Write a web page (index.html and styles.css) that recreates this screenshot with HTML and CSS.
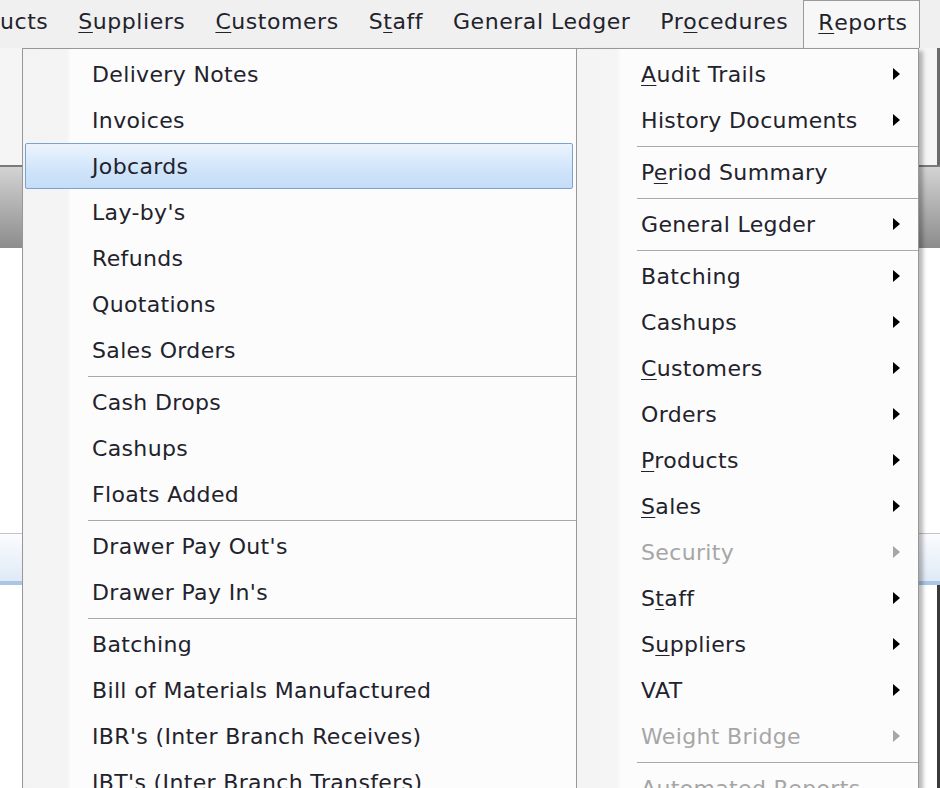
FILE: index.html
```html
<!DOCTYPE html>
<html>
<head>
<meta charset="utf-8">
<link rel="stylesheet" href="styles.css">
</head>
<body>
<div class="app">
  <div class="menubar">
    <span class="top clip">ucts</span>
    <span class="top"><u>S</u>uppliers</span>
    <span class="top"><u>C</u>ustomers</span>
    <span class="top">S<u>t</u>aff</span>
    <span class="top">General Ledger</span>
    <span class="top">Pr<u>o</u>cedures</span>
    <span class="top active"><u>R</u>eports</span>
  </div>
  <div class="toolbar"></div>
  <div class="header"></div>
  <div class="workspace"></div>
  <div class="band"></div>
  <div class="rest"></div>

  <div class="menu menu-left">
    <div class="item">Delivery Notes</div>
    <div class="item">Invoices</div>
    <div class="item hot">Jobcards</div>
    <div class="item">Lay-by's</div>
    <div class="item">Refunds</div>
    <div class="item">Quotations</div>
    <div class="item">Sales Orders</div>
    <div class="sep"></div>
    <div class="item">Cash Drops</div>
    <div class="item">Cashups</div>
    <div class="item">Floats Added</div>
    <div class="sep"></div>
    <div class="item">Drawer Pay Out's</div>
    <div class="item">Drawer Pay In's</div>
    <div class="sep"></div>
    <div class="item">Batching</div>
    <div class="item">Bill of Materials Manufactured</div>
    <div class="item">IBR's (Inter Branch Receives)</div>
    <div class="item">IBT's (Inter Branch Transfers)</div>
  </div>

  <div class="menu menu-right">
    <div class="item sub"><span><u>A</u>udit Trails</span><i class="arrow"></i></div>
    <div class="item sub"><span>History Documents</span><i class="arrow"></i></div>
    <div class="sep"></div>
    <div class="item"><span>P<u>e</u>riod Summary</span></div>
    <div class="sep"></div>
    <div class="item sub"><span>General Legder</span><i class="arrow"></i></div>
    <div class="sep"></div>
    <div class="item sub"><span>Batching</span><i class="arrow"></i></div>
    <div class="item sub"><span>Cashups</span><i class="arrow"></i></div>
    <div class="item sub"><span><u>C</u>ustomers</span><i class="arrow"></i></div>
    <div class="item sub"><span>Orders</span><i class="arrow"></i></div>
    <div class="item sub"><span><u>P</u>roducts</span><i class="arrow"></i></div>
    <div class="item sub"><span><u>S</u>ales</span><i class="arrow"></i></div>
    <div class="item sub disabled"><span>Security</span><i class="arrow"></i></div>
    <div class="item sub"><span>S<u>t</u>aff</span><i class="arrow"></i></div>
    <div class="item sub"><span>S<u>u</u>ppliers</span><i class="arrow"></i></div>
    <div class="item sub"><span>VAT</span><i class="arrow"></i></div>
    <div class="item sub disabled"><span>Weight Bridge</span><i class="arrow"></i></div>
    <div class="sep"></div>
    <div class="item disabled"><span>Automated Reports</span></div>
  </div>
</div>
</body>
</html>
```
FILE: styles.css
```css
html, body {
  margin: 0;
  padding: 0;
}
body {
  width: 940px;
  height: 788px;
  overflow: hidden;
  background: #ffffff;
  font-family: "DejaVu Sans", sans-serif;
  font-size: 22px;
  letter-spacing: 0.35px;
  color: #22222c;
}
.app {
  position: relative;
  width: 940px;
  height: 788px;
  display: flex;
  flex-direction: column;
  overflow: hidden;
}
u {
  text-decoration: underline;
  text-underline-offset: 3px;
  text-decoration-thickness: 1px;
}
.menubar {
  height: 48px;
  flex: none;
  display: flex;
  align-items: stretch;
  background: #f0f0f0;
  white-space: nowrap;
  letter-spacing: 0.55px;
}
.top {
  display: flex;
  align-items: center;
  padding: 0 15px 5px;
  box-sizing: border-box;
}
.top.clip {
  padding-left: 0;
}
.top.active {
  background: #f7f7f7;
  border: 1px solid #9a9a9a;
  border-bottom: none;
  padding: 0 11px 5px 14px;
}
.toolbar {
  height: 117px;
  flex: none;
  background: #f5f5f5;
  border-right: 3px solid #6a6a6a;
  box-sizing: border-box;
}
.header {
  height: 83px;
  flex: none;
  border-top: 2px solid #7a7a7a;
  background: linear-gradient(#d3d3d3, #8c8c8c);
  box-sizing: border-box;
}
.workspace {
  height: 285px;
  flex: none;
  background: #ffffff;
}
.band {
  height: 52px;
  flex: none;
  border-top: 1px solid #c4c4c4;
  border-bottom: 4px solid #a9c6e6;
  background: linear-gradient(#fbfcfe, #dfeaf6);
  box-sizing: border-box;
}
.rest {
  flex: 1;
  background: #ffffff;
  border-right: 3px solid #3a3a3a;
}
.menu {
  position: absolute;
  top: 48px;
  box-sizing: border-box;
  border: 1px solid #979797;
  padding: 2px 0;
  white-space: nowrap;
}
.menu-left {
  left: 22px;
  width: 555px;
  height: 800px;
  background: linear-gradient(to right, #f3f3f3 0, #f4f4f4 44px, #fcfcfc 48px, #fcfcfc 100%);
}
.menu-right {
  left: 576px;
  width: 343px;
  height: 800px;
  background: linear-gradient(to right, #f4f4f4 0, #f5f5f5 40px, #fcfcfc 44px, #fcfcfc 100%);
  box-shadow: 4px 3px 4px rgba(0, 0, 0, 0.28);
}
.item {
  height: 46px;
  box-sizing: border-box;
  display: flex;
  align-items: center;
  margin: 0 3px 0 2px;
  border: 1px solid transparent;
  border-radius: 2px;
}
.menu-left .item {
  padding-left: 66px;
}
.menu-right .item {
  padding-left: 61px;
  padding-right: 14px;
  justify-content: space-between;
}
.item.hot {
  border-color: #7da2ce;
  background: linear-gradient(#ecf4fd, #cfe4fa 60%, #c4ddf7);
}
.item.disabled {
  color: #a6a6a6;
}
.arrow {
  display: block;
  width: 0;
  height: 0;
  border-top: 6px solid transparent;
  border-bottom: 6px solid transparent;
  border-left: 7px solid #000000;
}
.disabled .arrow {
  border-left-color: #a6a6a6;
}
.sep {
  height: 6px;
  background: linear-gradient(transparent 3px, #a8a8a8 3px, #a8a8a8 4px, #ffffff 4px, #ffffff 5px, transparent 5px);
}
.menu-left .sep {
  margin-left: 65px;
}
.menu-right .sep {
  margin-left: 60px;
}
```
